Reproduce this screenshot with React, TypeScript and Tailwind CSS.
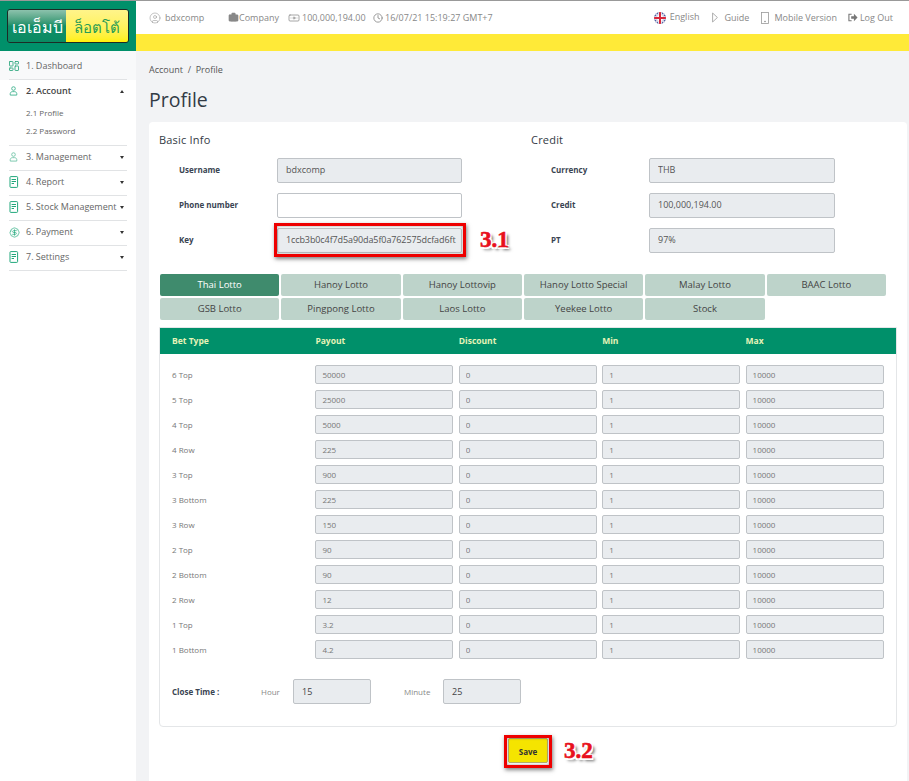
import React from 'react';
import { Banknote, Briefcase, Clock, LayoutDashboard, BadgeDollarSign, CircleUser } from 'lucide-react';

const ReportIcon: React.FC<{ className?: string }> = ({ className = '' }) => (
  <svg width="11" height="12" viewBox="0 0 11 12" fill="none" stroke="currentColor" strokeWidth="1" className={className}>
    <rect x="1" y="0.6" width="7.6" height="10.8" rx="0.8" />
    <path d="M2.6 3.5H7M2.6 5.5H7M2.6 7.5H5" />
  </svg>
);

const UserIcon: React.FC<{ className?: string }> = ({ className = '' }) => (
  <svg width="9" height="10" viewBox="0 0 11 12" fill="none" stroke="currentColor" strokeWidth="1.2" className={className}>
    <circle cx="5.5" cy="3" r="2.2" />
    <path d="M1.5 11V9.2C1.5 7.8 2.8 6.8 4.2 6.8H6.8C8.2 6.8 9.5 7.8 9.5 9.2V11Z" />
  </svg>
);

const DashIcon: React.FC<{ className?: string }> = ({ className = '' }) => (
  <LayoutDashboard size={12} strokeWidth={1.7} className={`ml-[-1px] ${className}`} />
);

const PayIcon: React.FC<{ className?: string }> = ({ className = '' }) => (
  <BadgeDollarSign size={11} strokeWidth={1.5} className={className} />
);

const menu = [
  { label: '1. Dashboard', icon: DashIcon, tint: 'text-[#2aa67c]', active: true },
  { label: '2. Account', icon: UserIcon, tint: 'text-[#4db896]', open: true, subs: ['2.1 Profile', '2.2 Password'] },
  { label: '3. Management', icon: UserIcon, tint: 'text-[#7cc9ae]' },
  { label: '4. Report', icon: ReportIcon, tint: 'text-[#1fa77a]' },
  { label: '5. Stock Management', icon: ReportIcon, tint: 'text-[#1fa77a]' },
  { label: '6. Payment', icon: PayIcon, tint: 'text-[#1fa77a]' },
  { label: '7. Settings', icon: ReportIcon, tint: 'text-[#1fa77a]' },
];

const tabs = [
  'Thai Lotto', 'Hanoy Lotto', 'Hanoy Lottovip', 'Hanoy Lotto Special', 'Malay Lotto', 'BAAC Lotto',
  'GSB Lotto', 'Pingpong Lotto', 'Laos Lotto', 'Yeekee Lotto', 'Stock',
];

const rates = [
  ['6 Top', '50000'], ['5 Top', '25000'], ['4 Top', '5000'], ['4 Row', '225'],
  ['3 Top', '900'], ['3 Bottom', '225'], ['3 Row', '150'], ['2 Top', '90'],
  ['2 Bottom', '90'], ['2 Row', '12'], ['1 Top', '3.2'], ['1 Bottom', '4.2'],
];

const Caret: React.FC<{ up?: boolean }> = ({ up }) => (
  <span className={`w-0 h-0 border-x-[2.5px] border-x-transparent ${up ? 'border-b-[3px] border-b-[#333]' : 'border-t-[3px] border-t-[#333]'}`} />
);

const Field: React.FC<{ value: string; className?: string }> = ({ value, className = '' }) => (
  <input
    readOnly
    value={value}
    className={`bg-[#e9ecef] border border-[#bfc3c7] rounded-[2px] outline-none ${className}`}
  />
);

const FormRow: React.FC<{ label: string; value: string; white?: boolean; wide?: boolean; tight?: boolean }> = ({ label, value, white, wide, tight }) => (
  <div className="flex items-center h-[25px] pl-5">
    <label className="w-[98px] pb-[2px] text-[8px] font-bold text-[#3a4452]">{label}</label>
    <input
      readOnly
      value={value}
      className={`${wide ? 'w-[186px]' : 'w-[185px]'} h-[25px] pl-2 pb-[2px] border border-[#bfc3c7] rounded-[2px] outline-none text-[9px] text-[#555] ${tight ? 'tracking-[-0.1px]' : ''} ${white ? 'bg-white' : 'bg-[#e9ecef]'}`}
    />
  </div>
);

const Flag = () => (
  <svg width="12" height="12" viewBox="0 0 13 13">
    <clipPath id="flag"><circle cx="6.5" cy="6.5" r="6.5" /></clipPath>
    <g clipPath="url(#flag)">
      <rect width="13" height="13" fill="#3f4f9a" />
      <path d="M0 0L13 13M13 0L0 13" stroke="#d8d8e8" strokeWidth="2.4" />
      <path d="M6.5 0V13M0 6.5H13" stroke="#fff" strokeWidth="4" />
      <path d="M6.5 0V13M0 6.5H13" stroke="#d8283c" strokeWidth="2.2" />
    </g>
  </svg>
);

const Sidebar = () => (
  <aside className="w-[136px] shrink-0 bg-white">
    <div className="h-[50px] bg-[#00906a] flex items-center pl-[7px]">
      <div className="w-[122px] h-[34px] flex rounded-[3px] border-[1.5px] border-[#1c2b26] overflow-hidden font-['Noto_Sans','DejaVu_Sans',sans-serif] leading-none">
        <div className="flex-1 text-[16px] bg-gradient-to-b from-[#8cc2ad] via-[#108f68] to-[#0a8a62] text-white flex items-center justify-center pt-[2px]">เอเอ็มบี</div>
        <div className="w-[62px] text-[15px] bg-gradient-to-b from-[#fff48a] to-[#fff000] text-[#2a9c55] flex items-center justify-center pt-[2px]">ล็อตโต้</div>
      </div>
    </div>
    <nav>
      {menu.map((m, i) => {
        const Icon = m.icon;
        return (
          <div key={m.label} className={m.active ? 'bg-[#f8f9fa]' : ''}>
            <div className={`mx-[9px] border-b border-[#e1e3e5] ${m.subs ? 'pb-[5px]' : ''}`}>
              <div className={`flex items-center ${i === 0 ? 'h-[28px] pt-[1px]' : 'h-[24px] pb-[2px]'}`}>
                <span className="w-[17px] shrink-0 flex">
                  <Icon className={m.tint} />
                </span>
                <span className={`text-[9px] whitespace-nowrap ${m.open ? 'font-semibold text-[#444]' : 'text-[#666]'}`}>{m.label}</span>
                {i > 0 && <span className="ml-auto mr-[3px] flex"><Caret up={m.open} /></span>}
              </div>
              {m.subs && (
                <div className="pl-[17px]">
                  {m.subs.map(s => (
                    <div key={s} className="h-[18px] leading-[18px] text-[8px] text-[#666]">{s}</div>
                  ))}
                </div>
              )}
            </div>
          </div>
        );
      })}
    </nav>
  </aside>
);

const Topbar = () => (
  <header>
    <div className="h-[33px] bg-white flex items-center pl-[13px] pr-[16px] text-[9px] text-[#888]">
      <CircleUser size={12} strokeWidth={1} />
      <span className="ml-[4px] w-[63px]">bdxcomp</span>
      <Briefcase size={11} fill="#888" stroke="#888" strokeWidth={1} />
      <span className="w-[49px]">Company</span>
      <Banknote size={12} strokeWidth={1.5} />
      <span className="ml-[2px] w-[71px]">100,000,194.00</span>
      <Clock size={10} />
      <span className="ml-[2px]">16/07/21 15:19:27 GMT+7</span>
      <div className="ml-auto flex items-center">
        <Flag />
        <span className="ml-[4px] mt-[-2px]">English</span>
        <svg width="6" height="11" viewBox="0 0 6 11" fill="none" stroke="#999" strokeWidth="0.8" className="ml-[13px]">
          <path d="M0.6 1L5.4 5.5L0.6 10Z" />
        </svg>
        <span className="ml-[6px]">Guide</span>
        <svg width="8" height="12" viewBox="0 0 8 12" fill="none" stroke="#999" strokeWidth="0.8" className="ml-[12px]">
          <rect x="0.5" y="0.5" width="7" height="11" />
          <circle cx="4" cy="9.5" r="0.5" fill="#777" />
        </svg>
        <span className="ml-[5px]">Mobile Version</span>
        <svg width="10" height="9" viewBox="0 0 11 9" fill="#777" className="ml-[11px]">
          <path d="M4 1H1V8H4" fill="none" stroke="#777" strokeWidth="1.2" />
          <path d="M3.5 3H6.5V0.5L10.5 4.5L6.5 8.5V6H3.5Z" />
        </svg>
        <span className="ml-[2px]">Log Out</span>
      </div>
    </div>
    <div className="h-[17px] bg-[#ffea38]" />
  </header>
);

const Tabs = () => (
  <div className="grid grid-cols-6 gap-[2px] mt-[21px] ml-[11px] w-[726px]">
    {tabs.map((t, i) => (
      <div
        key={t}
        className={`h-[22px] flex items-center justify-center rounded-[2px] text-[9.5px] ${i === 0 ? 'bg-[#3f8b6d] text-white' : 'bg-[#bdd3ca] text-[#444]'}`}
      >
        {t}
      </div>
    ))}
  </div>
);

const RateTable = () => (
  <div className="mt-[7px] ml-[10px] w-[738px] h-[400px] border border-[#e4e6e8] rounded-b-[4px] overflow-hidden">
    <div className="h-[26px] bg-[#00906a] grid grid-cols-[143.4px_143.4px_143.4px_143.4px_143.4px] items-center pl-3 text-[8.5px] font-bold text-[#e6f3b8]">
      <span>Bet Type</span>
      <span>Payout</span>
      <span>Discount</span>
      <span>Min</span>
      <span>Max</span>
    </div>
    <div className="pt-[8px] pl-3">
      {rates.map(([type, payout]) => (
        <div key={type} className="h-[25px] grid grid-cols-[143.4px_143.4px_143.4px_143.4px_143.4px] items-center">
          <span className="text-[8px] text-[#777]">{type}</span>
          {[payout, '0', '1', '10000'].map((v, i) => (
            <Field key={i} value={v} className="w-[138px] h-[19px] px-[6px] text-[8px] text-[#777]" />
          ))}
        </div>
      ))}
    </div>
    <div className="mt-[17px] pl-3 flex items-center">
      <span className="w-[89px] text-[8px] font-bold text-[#3a4452]">Close Time :</span>
      <span className="w-[32px] text-[8px] text-[#888]">Hour</span>
      <Field value="15" className="w-[78px] h-[25px] px-2 text-[9px] text-[#444]" />
      <span className="ml-[33px] w-[39px] text-[8px] text-[#888]">Minute</span>
      <Field value="25" className="w-[78px] h-[25px] px-2 text-[9px] text-[#444]" />
    </div>
  </div>
);

const Callout: React.FC<{ children: React.ReactNode; className?: string }> = ({ children, className = '' }) => (
  <span className={`absolute font-['Liberation_Serif',serif] font-bold text-[23px] leading-none text-[#e8101c] [-webkit-text-stroke:0.6px_#e8101c] [text-shadow:1.5px_1.5px_0_#fff,-1.5px_-1.5px_0_#fff,1.5px_-1.5px_0_#fff,-1.5px_1.5px_0_#fff,3px_3px_3px_#666] ${className}`}>
    {children}
  </span>
);

export default function App() {
  return (
    <div className="flex h-[781px] overflow-hidden border-t border-[#999] bg-[#f2f3f5] font-['Open_Sans',sans-serif]">
      <Sidebar />
      <main className="flex-1 min-w-0">
        <Topbar />
        <div className="pl-[13px] pt-[13px]">
          <div className="text-[9px] text-[#555] h-[12px] leading-[12px]">Account&nbsp;&nbsp;/&nbsp;&nbsp;Profile</div>
          <h1 className="mt-[10px] text-[19.5px] leading-[27px] font-medium text-[#333b45]">Profile</h1>
          <section className="relative mt-[9px] w-[758px] h-[680px] bg-white rounded-t-[4px]">
            <div className="flex pl-[10px] pt-[10px]">
              <div className="w-[372px]">
                <h2 className="h-[15px] leading-[15px] text-[11px] text-[#333b45] tracking-[0.2px]">Basic Info</h2>
                <div className="mt-[11px] flex flex-col gap-[10px]">
                  <FormRow label="Username" value="bdxcomp" />
                  <FormRow label="Phone number" value="" white />
                  <FormRow label="Key" value="1ccb3b0c4f7d5a90da5f0a762575dcfad6ft" tight />
                </div>
              </div>
              <div>
                <h2 className="h-[15px] leading-[15px] text-[11px] text-[#333b45] tracking-[0.2px]">Credit</h2>
                <div className="mt-[11px] flex flex-col gap-[10px]">
                  <FormRow label="Currency" value="THB" wide />
                  <FormRow label="Credit" value="100,000,194.00" wide />
                  <FormRow label="PT" value="97%" wide />
                </div>
              </div>
            </div>
            <Tabs />
            <RateTable />
            <div className="mt-[11px] flex justify-center">
              <button className="w-[40px] h-[25px] pt-[2px] bg-[#f5e400] border border-[#b5b06a] rounded-[2px] text-[8px] font-bold text-[#333]">Save</button>
            </div>

            {/* annotation boxes */}
            <div className="absolute left-[125px] top-[101px] w-[192px] h-[34px] border-[3px] border-[#ee0000] shadow-[1px_2px_4px_rgba(0,0,0,0.5),inset_0_0_3px_rgba(0,0,0,0.4)] pointer-events-none" />
            <Callout className="left-[331px] top-[106px]">3.1</Callout>
            <div className="absolute left-[355px] top-[613px] w-[48px] h-[33px] border-[3px] border-[#ee0000] shadow-[1px_2px_4px_rgba(0,0,0,0.5),inset_0_0_3px_rgba(0,0,0,0.4)] pointer-events-none" />
            <Callout className="left-[415px] top-[617px]">3.2</Callout>
          </section>
        </div>
      </main>
    </div>
  );
}
